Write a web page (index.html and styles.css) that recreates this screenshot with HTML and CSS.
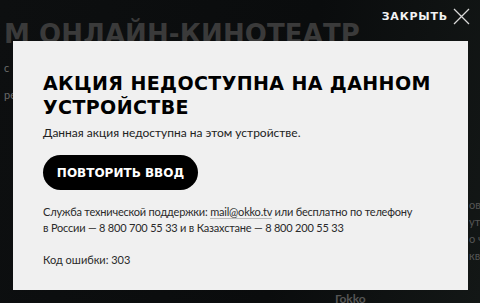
FILE: index.html
```html
<!DOCTYPE html>
<html lang="ru">
<head>
  <meta charset="UTF-8" />
  <meta name="viewport" content="width=device-width, initial-scale=1.0"/>
  <title>Okko</title>
  <link rel="stylesheet" href="styles.css">
</head>
<body>
  <div class="page">
    <div class="page-title">М ОНЛАЙН-КИНОТЕАТР</div>
    <div class="page-side">
      <span>с</span>
      <span>ре</span>
    </div>
    <div class="page-right">
      <span>овн</span>
      <span>уто</span>
      <span>о ч</span>
      <span>кв</span>
    </div>
    <div class="page-logo">Гоkko</div>
  </div>

  <a class="close" href="#">
    <span>ЗАКРЫТЬ</span>
    <svg width="17" height="17" viewBox="0 0 17 17">
      <path d="M1 1 L16 16 M16 1 L1 16" stroke="#d8d8d8" stroke-width="1.3" fill="none"/>
    </svg>
  </a>

  <div class="modal">
    <h2>АКЦИЯ НЕДОСТУПНА НА ДАННОМ УСТРОЙСТВЕ</h2>
    <p class="lead">Данная акция недоступна на этом устройстве.</p>
    <button class="retry">ПОВТОРИТЬ ВВОД</button>
    <p class="support">Служба технической поддержки: <a href="#">mail@okko.tv</a> или бесплатно по телефону<br>в России — 8 800 700 55 33 и в Казахстане — 8 800 200 55 33</p>
    <p class="code">Код ошибки: 303</p>
  </div>
</body>
</html>
```

FILE: styles.css
```css
body {
    margin: 0;
    width: 480px;
    height: 303px;
    overflow: hidden;
    background: linear-gradient(100deg, #0d0f10 0%, #0a0c0d 60%, #131716 100%);
    font-family: Lato, "Noto Sans", sans-serif;
    position: relative;
}
.page {
    height: 303px;
    position: relative;
    overflow: hidden;
}
.page-title {
    padding: 19px 0 0 4px;
    font-family: "DejaVu Sans", sans-serif;
    font-weight: bold;
    font-size: 26px;
    letter-spacing: 0.1px;
    color: #3a3a3a;
    white-space: nowrap;
}
.page-side {
    display: flex;
    flex-direction: column;
    gap: 14px;
    padding: 12px 0 0 4px;
    color: #6a6a6a;
    font-size: 11px;
}
.page-right {
    position: absolute;
    left: 469px;
    top: 198px;
    width: 11px;
    overflow: hidden;
    display: flex;
    flex-direction: column;
    gap: 4px;
    color: #555;
    font-size: 11px;
    white-space: nowrap;
}
.page-logo {
    position: absolute;
    left: 335px;
    top: 291px;
    color: #555;
    font-weight: bold;
    font-size: 12px;
}
.close {
    position: absolute;
    top: 8px;
    right: 10px;
    display: flex;
    align-items: center;
    gap: 5px;
    color: #f2f2f2;
    text-decoration: none;
    font-family: "DejaVu Sans", sans-serif;
    font-weight: bold;
    font-size: 11px;
    letter-spacing: 0.8px;
}
.modal {
    position: absolute;
    left: 13px;
    top: 41px;
    width: 455px;
    height: 249px;
    box-sizing: border-box;
    padding: 30px 20px 0 30px;
    background-color: #f0f0f0;
    color: #1a1a1a;
}
h2 {
    margin: 0;
    font-family: "DejaVu Sans", sans-serif;
    font-weight: bold;
    font-size: 19px;
    line-height: 24px;
    letter-spacing: 0.4px;
    color: #000;
}
.lead {
    margin: 6px 0 0 0;
    font-size: 12px;
    line-height: 16px;
    color: #222;
}
.retry {
    margin-top: 14px;
    width: 155px;
    height: 35px;
    border: none;
    border-radius: 18px;
    background-color: #000;
    color: #fff;
    font-family: "DejaVu Sans", sans-serif;
    font-weight: bold;
    font-size: 12px;
    cursor: pointer;
}
.support {
    margin: 14px 0 0 0;
    font-size: 11px;
    line-height: 16px;
    letter-spacing: -0.2px;
    color: #2a2a2a;
    white-space: nowrap;
}
.support a {
    color: #2a2a2a;
    text-decoration: none;
    border-bottom: 1px solid #bbb;
}
.code {
    margin: 16px 0 0 0;
    font-size: 11px;
    line-height: 16px;
    color: #2a2a2a;
}
```
